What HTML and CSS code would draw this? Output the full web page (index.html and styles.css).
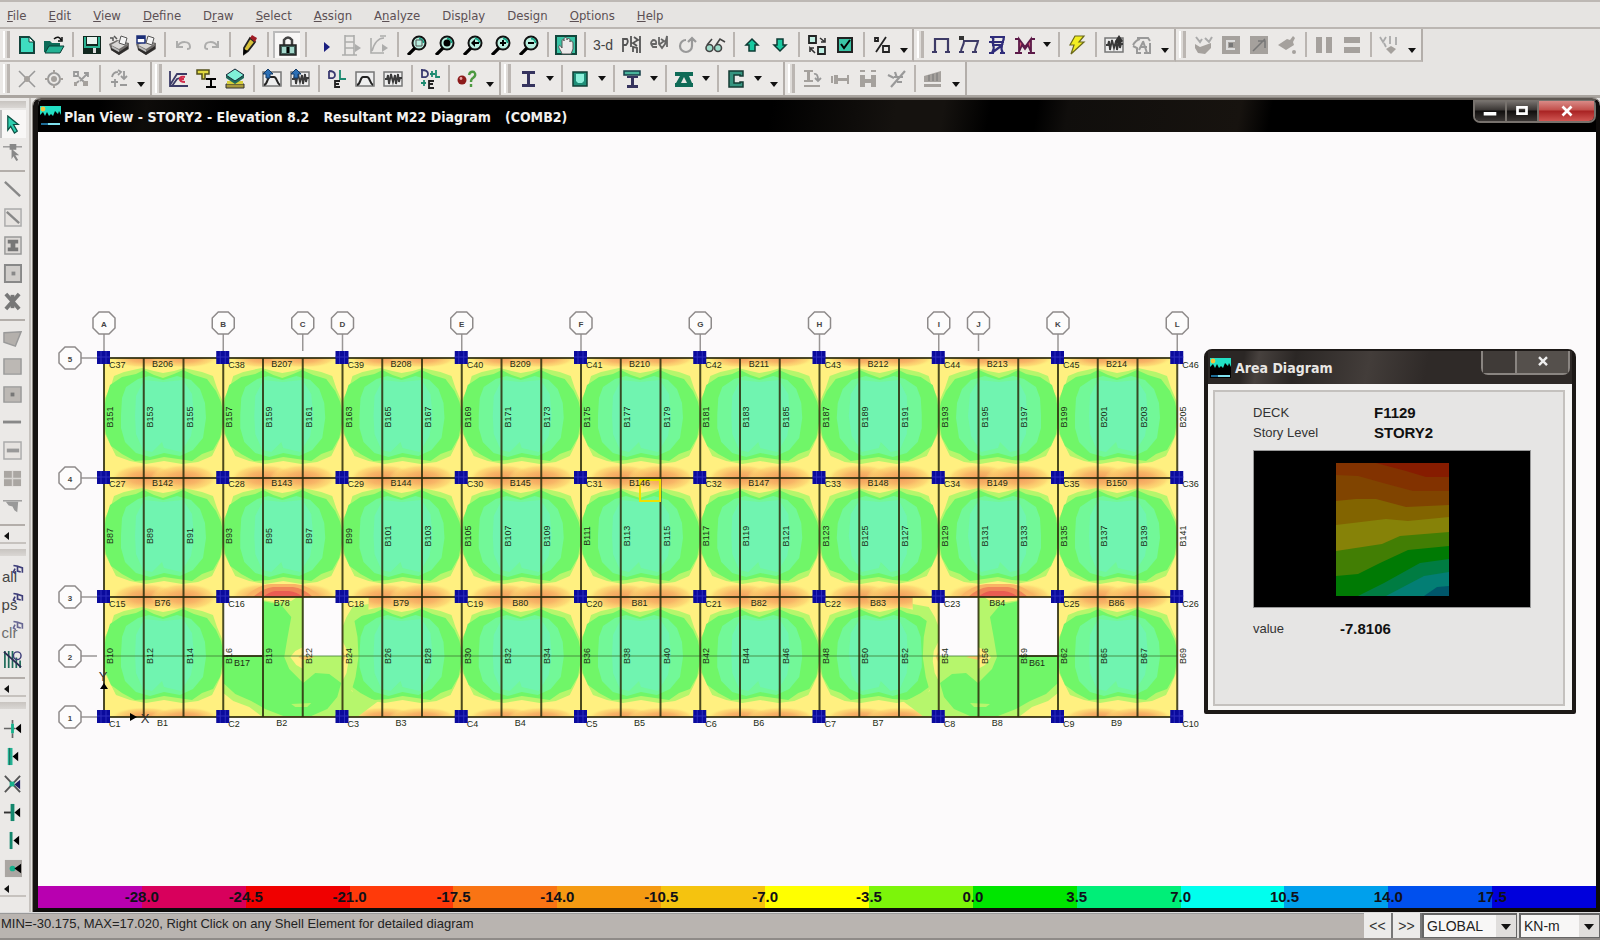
FILE: index.html
```html
<!DOCTYPE html>
<html lang="en">
<head>
<meta charset="utf-8">
<title>Plan View - STORY2</title>
<link rel="stylesheet" href="styles.css">
</head>
<body>
<svg width="0" height="0" class="defs" aria-hidden="true">
  <defs>
    <symbol id="app" viewBox="0 0 21 20"><path fill="#22e0c4" d="M0 0h21v14H0z"/><path fill="#000" d="M0 14V9l3-3 2 4 2-4 2 4 2-2 2 2 2-5 3 3 1-3 2 4v5z"/><circle cx="3" cy="3" r="2.4" fill="#f2c53c"/><path fill="#000" d="M0 14h21v6H0z"/><path fill="#1d6d97" d="M1 17h7v2H1z"/><path fill="#7fe0ee" d="M8 17h12v2H8z"/></symbol>
    <symbol id="lens" viewBox="0 0 20 20"><circle cx="12" cy="8" r="6.5" fill="#b9efe0" stroke="#111" stroke-width="2"/><path d="M8 13L1 20" stroke="#000" stroke-width="3.2"/><path d="M12 3.500a4.500 4.500 0 0 1 4.500 4.500" fill="none" stroke="#14a587" stroke-width="1.800"/></symbol>
    <symbol id="printer" viewBox="0 0 20 20"><path fill="#6f6c6a" d="M0 9l8-4 12 3v6l-10 6-8-5z"/><path fill="#d9d7d5" d="M2 10l7-4 9 3-8 5z"/><path fill="#f4f4f4" stroke="#555" d="M12 1l6 2-2 7-6-2z"/><path fill="#2e2c2b" d="M2 13l8 4 9-6v3l-9 6-8-5z"/><path fill="#bbb" d="M3 11l7 4v2l-7-4z"/></symbol>
    <symbol id="wave" viewBox="0 0 20 20"><path fill="#eee" stroke="#777" stroke-width="1.500" d="M1 3h18v14H1z"/><path fill="none" stroke="#3a3a3a" stroke-width="1.800" d="M2 10h2l1-4 1 9 2-10 2 8 2-7 1 9 2-10 1 8 1-4h2"/></symbol>
    <symbol id="hump" viewBox="0 0 20 20"><path fill="#eee" stroke="#777" stroke-width="1.500" d="M1 3h18v14H1z"/><path fill="none" stroke="#222" stroke-width="2" d="M2 16c4-1 3-8 6-8h4c3 0 3 7 6 8"/></symbol>
    <symbol id="hand" viewBox="0 0 16 14"><path fill="none" stroke="#3c3c78" stroke-width="2" d="M3 2l5 1v6l4 1M8 3l6 2v6M5 6l-2 4 3 2"/></symbol>
  </defs>
</svg>

<nav class="menu" aria-label="Main menu">
  <a href="#file"><u>F</u>ile</a><a href="#edit"><u>E</u>dit</a><a href="#view"><u>V</u>iew</a><a href="#define"><u>D</u>efine</a><a href="#draw">D<u>r</u>aw</a><a href="#select"><u>S</u>elect</a><a href="#assign"><u>A</u>ssign</a><a href="#analyze">A<u>n</u>alyze</a><a href="#display">Dis<u>p</u>lay</a><a href="#design">Desi<u>g</u>n</a><a href="#options"><u>O</u>ptions</a><a href="#help"><u>H</u>elp</a>
</nav>

<div class="tools">
  <div class="row">
    <div class="bar bar-main">
      <i class="grip"></i>
      <div class="set tight">
        <button aria-label="New"><svg viewBox="0 0 20 20"><path fill="#3fdcc0" stroke="#14443c" stroke-width="2" d="M3 2h9l5 5v11H3z"/><path fill="#fff" stroke="#14443c" d="M12 2v5h5z"/></svg></button>
        <button aria-label="Open"><svg viewBox="0 0 20 20"><path fill="#0c6b58" d="M0 6h6l2 2h8v9H0z"/><path fill="#24b294" stroke="#0b3d34" d="M1 18l4-7h15l-4 7z"/><path fill="none" stroke="#111" stroke-width="1.500" d="M10 4c3-3 6-2 7 1m1-3v4h-4"/></svg></button>
        <i class="sep"></i>
        <button aria-label="Save"><svg viewBox="0 0 20 20"><path fill="#12271f" d="M1 1h18v18H1z"/><path fill="#e9f4ef" d="M5 2h10v7H5z"/><path fill="#2bb393" d="M2 2h2v9h12V2h2v11H2z"/><path fill="#ddd" d="M11 13h3v5h-3z"/></svg></button>
        <button aria-label="Print"><svg viewBox="0 0 20 20"><use href="#printer"/><path fill="none" stroke="#555" stroke-width="1.500" d="M1 3h3v3M5 1l3 3"/></svg></button>
        <button aria-label="Print setup"><svg viewBox="0 0 20 20"><use href="#printer"/><path fill="#fff" stroke="#1c2f78" stroke-width="1.500" d="M1 1h8v7H1z"/><path fill="#1c2f78" d="M1 1h8v3H1z"/></svg></button>
        <i class="sep"></i>
        <button aria-label="Undo" class="off"><svg viewBox="0 0 20 20"><path fill="none" stroke="#999" stroke-width="2" d="M3 6v6h6M3 12c4-7 13-6 13 0 0 2-1 2-3 2"/></svg></button>
        <button aria-label="Redo" class="off"><svg viewBox="0 0 20 20"><path fill="none" stroke="#999" stroke-width="2" d="M17 6v6h-6M17 12C13 5 4 6 4 12c0 2 1 2 3 2"/></svg></button>
        <i class="sep"></i>
        <button aria-label="Draw"><svg viewBox="0 0 20 20"><path fill="#d8c23a" stroke="#222" stroke-width="1.800" d="M5 13L11 3l5 4-7 9-4 3z"/><path fill="#a01c24" d="M11 3l2-3 5 3-2 4z"/><path d="M4 20l1-6 4 2z"/></svg></button>
        <i class="sep"></i>
        <button aria-label="Lock model" class="pressed"><svg viewBox="0 0 20 20"><path fill="none" stroke="#444" stroke-width="2.500" d="M6 10V4q4-5 8 0v6"/><path fill="#41615a" stroke="#222" stroke-width="1.500" d="M2 9h16v10H2z"/><path fill="#a5d8cc" d="M4 11h4v6H4zm8 0h4v6h-4z"/><path d="M9 11h2v6H9z"/></svg></button>
        <i class="sep"></i>
        <button aria-label="Run"><svg viewBox="0 0 20 20"><path fill="#1b1f80" d="M9 7l6 5-6 5z"/></svg></button>
        <button aria-label="Run construction sequence" class="off"><svg viewBox="0 0 20 20"><path fill="none" stroke="#999" stroke-width="1.600" d="M3 0v20M12 0v20M0 20h15M3 1h9M3 7h9M3 13h9"/><path fill="#999" d="M13 9l6 4-6 4z"/></svg></button>
        <button aria-label="Run nonlinear" class="off"><svg viewBox="0 0 20 20"><path fill="none" stroke="#999" stroke-width="1.600" d="M2 3v15h13M3 16C5 9 8 3 15 3M11 1h6"/><path fill="#999" d="M13 9l6 4-6 4z"/></svg></button>
        <i class="sep"></i>
      </div>
      <div class="set">
        <button aria-label="Zoom window"><svg viewBox="0 0 20 20"><use href="#lens"/><path fill="none" stroke="#555" d="M9 5h6v6H9z"/></svg></button>
        <button aria-label="Restore view"><svg viewBox="0 0 20 20"><use href="#lens"/><circle cx="12" cy="8" r="3.500"/></svg></button>
        <button aria-label="Previous zoom"><svg viewBox="0 0 20 20"><use href="#lens"/><path d="M8 8l4-4v3h4v2h-4v3z"/></svg></button>
        <button aria-label="Zoom in"><svg viewBox="0 0 20 20"><use href="#lens"/><path d="M11 5h2v2h2v2h-2v2h-2V9H9V7h2z"/></svg></button>
        <button aria-label="Zoom out"><svg viewBox="0 0 20 20"><use href="#lens"/><path d="M9 7h6v2H9z"/></svg></button>
        <i class="sep"></i>
        <button aria-label="Pan"><svg viewBox="0 0 20 20"><path fill="#3ac4a5" stroke="#12473c" stroke-width="2" d="M0 1h20v18H0z"/><path fill="#eceaea" stroke="#555" d="M6 19c-1-4-4-6-3-8s2 1 3 2V6c0-2 2-2 2 0V4c0-2 3-2 3 0v1c0-2 3-2 3 0v2c0-2 3-1 3 1v6l-2 5z"/></svg></button>
        <i class="sep"></i>
        <button aria-label="3-d view" class="word">3-d</button>
        <button aria-label="Plan view" class="glyph"><svg viewBox="0 0 20 20"><path fill="none" stroke="#555" stroke-width="1.800" d="M2 17V4h4q2 3-1 6H2M10 1v11M19 1v17M13 2l4 3-5 3 4 3M12 17v-5l4 1v5"/></svg></button>
        <button aria-label="Elevation view"><svg viewBox="0 0 20 20"><path fill="none" stroke="#666" stroke-width="1.800" d="M8 12H4q-4-4 0-7 4 0 3 4H3M10 2v7l3 4 3-4 2-8v11M12 4l3 2-4 3"/></svg></button>
        <button aria-label="Rotate 3D view"><svg viewBox="0 0 20 20"><path fill="none" stroke="#999" stroke-width="2.200" d="M9 5a6 6 0 1 0 6 6V5M11 7l4-4 4 4"/></svg></button>
        <button aria-label="Perspective toggle"><svg viewBox="0 0 20 20"><g fill="#9edccb" stroke="#444" stroke-width="1.600"><circle cx="4.500" cy="13" r="3.500"/><circle cx="13" cy="13" r="3.500"/></g><path fill="none" stroke="#444" stroke-width="1.600" d="M2 10l5-6M11 10l4-6 5 3"/></svg></button>
        <i class="sep"></i>
        <button aria-label="Move up"><svg viewBox="0 0 20 20"><path fill="#18c9a0" stroke="#0d3b34" stroke-width="1.500" d="M10 4l6 6h-3v6H7v-6H4z"/></svg></button>
        <button aria-label="Move down"><svg viewBox="0 0 20 20"><path fill="#18c9a0" stroke="#0d3b34" stroke-width="1.500" d="M10 16l6-6h-3V4H7v6H4z"/></svg></button>
        <i class="sep"></i>
        <button aria-label="Shrink objects"><svg viewBox="0 0 20 20"><path fill="#bfeee2" stroke="#222" stroke-width="1.800" d="M2 1h7v7H2zM11 12h7v7h-7z"/><path fill="none" stroke="#333" stroke-width="1.600" d="M13 3l5 4M18 3v4h-4M8 18l-5-5v4M3 13h4"/></svg></button>
        <button aria-label="Set options"><svg viewBox="0 0 20 20"><path fill="#3ac4a5" stroke="#222" stroke-width="2" d="M3 3h14v14H3z"/><path fill="none" stroke="#000" stroke-width="2" d="M6 9l3 4 6-8"/></svg></button>
        <i class="sep"></i>
        <button aria-label="Assign to group"><svg viewBox="0 0 20 20"><path fill="none" stroke="#222" stroke-width="1.800" d="M3 3h3v3H3zM14 2L4 17M11 11h6v6h-6z"/></svg></button>
        <button aria-label="More view tools" class="more"></button>
      </div>
    </div>
    <div class="bar">
      <i class="grip"></i>
      <div class="set">
        <button aria-label="Frame display"><svg viewBox="0 0 20 20"><path fill="none" stroke="#3d3a66" stroke-width="2.200" d="M4 17V4h13v13M1 17h5M14 17h5"/></svg></button>
        <button aria-label="Deformed shape"><svg viewBox="0 0 20 20"><path fill="none" stroke="#3d3a66" stroke-width="2" d="M2 17c0-5 3-6 3-11h14c-1 5-3 6-3 11M0 17h5M13 17h5"/><path fill="#333" d="M0 1h5v4H0z"/></svg></button>
        <button aria-label="Mode shape"><svg viewBox="0 0 20 20"><path fill="none" stroke="#2f2c7a" stroke-width="2.200" d="M3 2h15M5 2c4 3-2 5 2 8M16 2c3 3-3 5 0 8M2 7h15M5 10h11M6 10c2 3 0 5-1 8M15 10c-1 3-1 5 1 8M6 17l8-6M2 18h5M13 18h5"/></svg></button>
        <button aria-label="Member forces"><svg viewBox="0 0 20 20"><path fill="#d65a75" stroke="#5c1a48" stroke-width="1.800" d="M4 17V4l6 8 6-8v13l-3-7-3 4-3-4zM0 18h7M13 18h7M0 4h4M16 4h4"/></svg></button>
        <button aria-label="Forces menu" class="drop"></button>
        <i class="sep"></i>
        <button aria-label="Energy diagram"><svg viewBox="0 0 20 20"><path fill="#f2ee22" stroke="#6b691a" stroke-width="1.200" d="M8 1h9l-5 6h5L4 19l3-9H3z"/></svg></button>
        <i class="sep"></i>
        <button aria-label="Response plot"><svg viewBox="0 0 20 20"><use href="#wave"/><path fill="#333" d="M15 0l4 6-4 4-4-4z"/></svg></button>
        <button aria-label="Output tables"><svg viewBox="0 0 20 20"><path fill="none" stroke="#999" stroke-width="2" d="M5 3h11l2 3M1 10q3-5 7-6M1 11l4 2v5h4M11 7L7 15M11 6l4 12M9 12h6M18 8v10h-6"/></svg></button>
        <button aria-label="More display tools" class="more"></button>
      </div>
    </div>
    <div class="bar">
      <i class="grip"></i>
      <div class="set gray">
        <button aria-label="Assign joint"><svg viewBox="0 0 20 20"><path d="M2 9l5 3 11-4v5l-6 6-7-1-3-5z"/><path fill="none" stroke="#aaa" stroke-width="2" d="M3 2l4 5 2-3M12 3l4 4 3-5"/></svg></button>
        <button aria-label="Assign area"><svg viewBox="0 0 20 20"><path d="M1 1h18v18H1z"/><path fill="#ddd" d="M5 5h9v2H7v6h7v2H5z"/><path fill="#777" d="M8 8h4v4H8z"/></svg></button>
        <button aria-label="Assign opening"><svg viewBox="0 0 20 20"><path d="M1 1h18v18H1z"/><path fill="none" stroke="#777" stroke-width="1.500" d="M4 16L16 4M9 6h7v7"/></svg></button>
        <button aria-label="Assign diaphragm"><svg viewBox="0 0 20 20"><path d="M1 10l9-6 3 1 3-4 2 2-2 4 1 3-8 5z"/><circle cx="17" cy="17" r="2"/></svg></button>
        <i class="sep"></i>
        <button aria-label="Split vertically"><svg viewBox="0 0 20 20"><path d="M2 2h6v16H2zM12 2h6v16h-6z"/></svg></button>
        <button aria-label="Split horizontally"><svg viewBox="0 0 20 20"><path d="M2 2h16v6H2zM2 12h16v6H2z"/></svg></button>
        <i class="sep"></i>
        <button aria-label="Area loads"><svg viewBox="0 0 20 20"><path d="M7 14l5-3 5 3-5 5z"/><path fill="none" stroke="#aaa" stroke-width="1.800" d="M1 2l3 5 3-5M5 8l2 4M11 1v8M17 2v8"/></svg></button>
        <button aria-label="More area tools" class="more"></button>
      </div>
    </div>
  </div>

  <div class="row">
    <div class="bar">
      <i class="grip"></i>
      <div class="set tight gray">
        <button aria-label="Point restraint"><svg viewBox="0 0 20 20"><path fill="none" stroke="#999" stroke-width="1.600" d="M2 2l16 16M18 2L2 18"/><circle cx="10" cy="10" r="3"/></svg></button>
        <button aria-label="Point mass"><svg viewBox="0 0 20 20"><circle cx="10" cy="10" r="6" fill="none" stroke="#999" stroke-width="2"/><circle cx="10" cy="10" r="3"/><path d="M9 1h2v4H9zM9 15h2v4H9zM1 9h4v2H1zM15 9h4v2h-4z"/></svg></button>
        <button aria-label="Point springs"><svg viewBox="0 0 20 20"><path fill="none" stroke="#999" stroke-width="1.800" d="M3 3h4v4H3zM8 8l6 6M16 5L9 12M13 4h4v4M4 15l4-3"/><path d="M12 12h5v5h-5zM3 13h3v4H3z"/></svg></button>
        <i class="sep"></i>
        <button aria-label="Point forces"><svg viewBox="0 0 20 20"><path fill="none" stroke="#999" stroke-width="1.800" d="M3 8q1-5 6-5M9 1l3 2-3 3M15 2v7M12 7l3 3 3-3M2 13h7M6 10v8M11 16h7"/></svg></button>
        <button aria-label="More point tools" class="more"></button>
      </div>
    </div>
    <div class="bar">
      <i class="grip"></i>
      <div class="set">
        <button aria-label="Materials"><svg viewBox="0 0 20 20"><path fill="none" stroke="#3b3a66" stroke-width="1.800" d="M1 2v15h18M1 16L8 5h10M3 17l5-7 3-1"/><path fill="none" stroke="#d12c4c" stroke-width="2.200" d="M16 8q-5-1-5 2t5 3M11 10h4"/></svg></button>
        <button aria-label="Frame sections"><svg viewBox="0 0 20 20"><path fill="#e2da42" stroke="#54501d" stroke-width="1.500" d="M0 1h12v4H8v5H5V5H0z"/><path d="M9 9h10v2h-4v6h4v2H9v-2h4v-6H9z"/></svg></button>
        <button aria-label="Wall slab sections"><svg viewBox="0 0 20 20"><path fill="#a89a3c" stroke="#333" d="M1 15h18v4H1z"/><path fill="#d6cf3c" d="M2 12h16v3H2z"/><path fill="#1f6b5a" d="M1 6l9 6 9-6v3l-9 6-9-6z"/><path fill="#7ff0d8" stroke="#123" d="M10 0l9 6-9 6-9-6z"/></svg></button>
        <i class="sep"></i>
        <button aria-label="Response spectrum functions"><svg viewBox="0 0 20 20"><use href="#hump"/><path fill="#2b6fb5" stroke="#123a66" d="M6 0l5 5H8v4H4V5H1z"/></svg></button>
        <button aria-label="Time history functions"><svg viewBox="0 0 20 20"><use href="#wave"/><path fill="#2b6fb5" stroke="#123a66" d="M6 0l5 5H8v4H4V5H1z"/></svg></button>
        <i class="sep"></i>
        <button aria-label="Static load cases"><svg viewBox="0 0 20 20"><path fill="none" stroke="#3a3a70" stroke-width="1.800" d="M2 2v7q6 1 6-3t-6-4"/><path fill="none" stroke="#1c8a70" stroke-width="1.800" d="M13 1v9h6"/><path fill="none" stroke="#222" stroke-width="1.800" d="M13 12H8v6h5M8 15h4"/></svg></button>
        <button aria-label="Response spectrum cases"><svg><use href="#hump"/></svg></button>
        <button aria-label="Time history cases"><svg><use href="#wave"/></svg></button>
        <i class="sep"></i>
        <button aria-label="Load combinations"><svg viewBox="0 0 20 20"><path fill="none" stroke="#3a3a70" stroke-width="1.800" d="M1 1h1v7q6 1 6-3t-6-4"/><path fill="none" stroke="#1c8a70" stroke-width="1.800" d="M10 5h5M12 2v6M16 1v7h4M1 14h5M4 11v6"/><path fill="none" stroke="#222" stroke-width="1.800" d="M14 12H9v7h5M9 15h4"/></svg></button>
        <i class="sep"></i>
        <button aria-label="Mass source"><svg viewBox="0 0 20 20"><circle cx="5" cy="11" r="4.500" fill="#8c1a1a"/><circle cx="4" cy="9.500" r="1.400" fill="#e7a4a4"/><path fill="none" stroke="#4d9a42" stroke-width="2.400" d="M12 6q1-4 5-3 3 3-1 6-2 1-2 4M14 15v3"/></svg></button>
        <button aria-label="More define tools" class="more"></button>
      </div>
    </div>
    <div class="bar">
      <i class="grip"></i>
      <div class="set">
        <button aria-label="Steel frame design"><svg viewBox="0 0 20 20"><path fill="#36345e" d="M4 2h13v3h-5v10h5v3H4v-3h5V5H4z"/></svg></button><button aria-label="Steel menu" class="drop"></button><i class="sep"></i>
        <button aria-label="Concrete frame design"><svg viewBox="0 0 20 20"><path fill="#1f8f78" stroke="#123f36" stroke-width="1.500" d="M3 3h14v14H3z"/><path fill="#8df0db" d="M6 5h8v7l-2 2H8l-2-2z"/></svg></button><button aria-label="Concrete menu" class="drop"></button><i class="sep"></i>
        <button aria-label="Composite beam design"><svg viewBox="0 0 20 20"><path fill="#49b39b" stroke="#173f4a" stroke-width="1.500" d="M2 2h16v4H2z"/><path fill="#36345e" d="M5 7h11v2h-4v7h4v3H5v-3h4V9H5z"/></svg></button><button aria-label="Composite menu" class="drop"></button><i class="sep"></i>
        <button aria-label="Steel joist design"><svg viewBox="0 0 20 20"><path fill="#0f6b57" d="M1 3h18v4h-4l3 7h1v4H1v-4h1l4-7H1z"/><path fill="#e9e7e4" d="M10 8l3 6H7z"/></svg></button><button aria-label="Joist menu" class="drop"></button><i class="sep"></i>
        <button aria-label="Shear wall design"><svg viewBox="0 0 20 20"><path fill="#36947f" stroke="#143a33" stroke-width="1.500" d="M3 2h14v5h-3V6H8v8h6v-1h3v5H3z"/></svg></button><button aria-label="Wall menu" class="drop"></button>
        <button aria-label="More design tools" class="more"></button>
      </div>
    </div>
    <div class="bar">
      <i class="grip"></i>
      <div class="set gray">
        <button aria-label="Frame section"><svg viewBox="0 0 20 20"><path d="M2 1h9v2H8v8h3v2H2v-2h3V3H2zM2 16h16v2H2z"/><path fill="none" stroke="#999" stroke-width="1.800" d="M12 5q4-1 4 6M13 9l3 3 3-3"/></svg></button>
        <button aria-label="Frame releases"><svg viewBox="0 0 20 20"><path d="M1 7h2v7H1zM4 6h4v9H4zM8 9h9v3H8zM17 6h2v9h-2z"/></svg></button>
        <button aria-label="End offsets"><svg viewBox="0 0 20 20"><path d="M2 1h5v2H2zM13 1h5v2h-5zM2 6h5v4h6V6h5v12h-5v-4H7v4H2z"/></svg></button>
        <button aria-label="Local axes"><svg viewBox="0 0 20 20"><path fill="none" stroke="#999" stroke-width="2.200" d="M2 6l6 3M19 2L5 18M9 3l2 6M8 8h9M11 13h5"/></svg></button>
        <i class="sep"></i>
        <button aria-label="Line loads"><svg viewBox="0 0 20 20"><path d="M1 7l17-5v11H1zM1 15h17v3H1z"/><path stroke="#777" d="M6 6v6M10 5v7M14 4v8"/></svg></button>
        <button aria-label="More line tools" class="more"></button>
      </div>
    </div>
  </div>
</div>

<div class="work">
  <aside class="side" aria-label="Drawing tools">
    <i class="grip-h first"></i>
    <button aria-label="Pointer" class="pressed"><svg viewBox="0 0 20 20"><path fill="#2fd0b0" stroke="#0c5144" stroke-width="1.300" d="M4 1l11 9h-5l4 7-3 2-4-7-3 4z"/></svg></button>
    <button aria-label="Reshaper"><svg viewBox="0 0 20 20"><path fill="none" stroke="#999" stroke-width="1.500" d="M0 4h20"/><path fill="#888" d="M7 1h7v6H7zM9 6l8 7h-4l3 5-2 1-3-5-2 3z"/></svg></button>
    <i class="sep"></i>
    <button aria-label="Draw lines"><svg viewBox="0 0 20 20"><path stroke="#888" stroke-width="2.500" d="M2 2l16 15"/></svg></button>
    <button aria-label="Create lines"><svg viewBox="0 0 20 20"><path fill="#e6e3e0" stroke="#aaa" stroke-width="1.500" d="M2 1h17v18H2z"/><path stroke="#888" stroke-width="2.500" d="M4 4l13 12"/></svg></button>
    <button aria-label="Create columns"><svg viewBox="0 0 20 20"><path fill="#dcd9d6" stroke="#999" stroke-width="1.500" d="M2 1h17v18H2z"/><path fill="#777" d="M5 4h11v4h-3v4h3v4H5v-4h3V8H5z"/></svg></button>
    <button aria-label="Create secondary beams"><svg viewBox="0 0 20 20"><path fill="#d0cdca" stroke="#888" stroke-width="2" d="M2 1h17v18H2z"/><path fill="#888" d="M9 8h4v4H9z"/></svg></button>
    <button aria-label="Create braces"><svg viewBox="0 0 20 20"><path stroke="#777" stroke-width="4" d="M3 2l14 16M17 2L3 18"/><path stroke="#777" stroke-width="4" d="M10 3v14"/></svg></button>
    <i class="sep"></i>
    <button aria-label="Draw areas"><svg viewBox="0 0 20 20"><path fill="#b4b0ac" stroke="#999" stroke-width="1.500" d="M1 4l18-1-6 15-12-4z"/></svg></button>
    <button aria-label="Draw rectangles"><svg viewBox="0 0 20 20"><path fill="#bcb8b4" stroke="#999" stroke-width="1.500" d="M1 2h18v16H1z"/></svg></button>
    <button aria-label="Create areas"><svg viewBox="0 0 20 20"><path fill="#bcb8b4" stroke="#999" stroke-width="1.500" d="M1 2h18v16H1z"/><path fill="#777" d="M8 8h4v4H8z"/></svg></button>
    <button aria-label="Draw walls"><svg viewBox="0 0 20 20"><path fill="#888" d="M0 8h19v3H0z"/></svg></button>
    <button aria-label="Create walls"><svg viewBox="0 0 20 20"><path fill="#e6e3e0" stroke="#aaa" stroke-width="1.500" d="M1 1h18v18H1z"/><path fill="#999" d="M4 8h13v4H4z"/></svg></button>
    <button aria-label="Draw windows"><svg viewBox="0 0 20 20"><path fill="#aaa6a2" d="M1 2h18v16H1z"/><path stroke="#d8d5d2" stroke-width="1.500" d="M10 2v16M1 10h18"/></svg></button>
    <button aria-label="Draw doors"><svg viewBox="0 0 20 20"><path stroke="#999" stroke-width="1.500" d="M0 4h20"/><path fill="#999" d="M3 5h13l-1 11-3-2-2-4-4-1z"/></svg></button>
    <i class="sep"></i>
    <button aria-label="More drawing tools" class="more-h"></button>
    <i class="grip-h"></i>
    <button aria-label="Select all" class="word sel">all<svg><use href="#hand"/></svg></button>
    <button aria-label="Previous selection" class="word sel">ps<svg><use href="#hand"/></svg></button>
    <button aria-label="Clear selection" class="word sel off">clr<svg><use href="#hand"/></svg></button>
    <button aria-label="Intersecting line select"><svg viewBox="0 0 20 20"><path stroke="#1f6b5a" stroke-width="1.800" d="M2 1v18M6 1v18M10 1v18M14 8v11M18 11v8"/><path stroke="#2b2b50" stroke-width="2" d="M1 2l18 16"/><circle cx="15" cy="6" r="4" fill="none" stroke="#3c3c78" stroke-width="1.500"/></svg></button>
    <i class="sep"></i>
    <button aria-label="More selection tools" class="more-h"></button>
    <i class="grip-h"></i>
    <button aria-label="Snap to grid points"><svg viewBox="0 0 20 20"><path fill="none" stroke="#666" stroke-width="1.800" d="M1 10h12M10 1v4M10 15v5"/><path stroke="#18b08c" stroke-width="3" d="M10 5v10"/><path d="M19 5v10l-6-5z"/></svg></button>
    <button aria-label="Snap to midpoints"><svg viewBox="0 0 20 20"><path fill="#24b294" d="M5 1h5v18H5z"/><path stroke="#1c6655" d="M7 1v18"/><path d="M16 5v10l-6-5z"/></svg></button>
    <button aria-label="Snap to intersections"><svg viewBox="0 0 20 20"><path fill="none" stroke="#555" stroke-width="2" d="M2 1l16 17M18 1L2 18"/><path fill="#18b08c" d="M7 7h5v5H7z"/><path fill="#1f1f60" d="M18 5v10l-6-5z"/></svg></button>
    <button aria-label="Snap to perpendicular"><svg viewBox="0 0 20 20"><path stroke="#333" stroke-width="2" d="M1 10h10"/><path fill="#14876d" d="M8 1h4v18H8z"/><path d="M18 5v10l-6-5z"/></svg></button>
    <button aria-label="Snap to lines"><svg viewBox="0 0 20 20"><path fill="#14876d" d="M7 1h3v18H7z"/><path d="M17 5v10l-6-5z"/></svg></button>
    <button aria-label="Snap to fine grid"><svg viewBox="0 0 20 20"><path fill="#aaa6a2" d="M2 1h18v18H2z"/><circle cx="10" cy="10" r="3" fill="#18b08c"/><path d="M19 5v10l-7-5z"/></svg></button>
    <button aria-label="More snap tools" class="more-h"></button>
  </aside>

  <main class="window">
    <header class="title">
      <svg class="logo"><use href="#app"/></svg>
      <h1><span>Plan View - STORY2 - Elevation 8.2</span><span>Resultant M22 Diagram</span><span>(COMB2)</span></h1>
      <div class="caption">
        <button aria-label="Minimize"><svg viewBox="0 0 20 20"><path fill="#fff" d="M3 11h14v4H3z"/></svg></button>
        <button aria-label="Maximize"><svg viewBox="0 0 20 20"><path fill="none" stroke="#fff" stroke-width="3" d="M5 6h10v7H5z"/></svg></button>
        <button aria-label="Close" class="close"><svg viewBox="0 0 20 20"><path stroke="#fff" stroke-width="3" d="M5 5l10 10M15 5L5 15"/></svg></button>
      </div>
    </header>
    <div class="canvas">
      <svg id="plan" viewBox="38 132 1558 753" preserveAspectRatio="xMinYMin meet" role="img" aria-label="Resultant M22 contour plan"></svg>
      <section class="dialog" aria-label="Area Diagram">
        <header class="dialog-title">
          <svg class="logo"><use href="#app"/></svg>
          <h2>Area Diagram</h2>
          <div class="dialog-caption"><button aria-label="Help"></button><button aria-label="Close dialog"><svg viewBox="0 0 20 20"><path stroke="#eee" stroke-width="3" d="M5 4l10 10M15 4L5 14"/></svg></button></div>
        </header>
        <div class="dialog-body">
          <div class="group">
            <dl class="facts"><dt>DECK</dt><dd>F1129</dd><dt>Story Level</dt><dd>STORY2</dd></dl>
            <div class="preview">
              <svg viewBox="0 0 113 133" role="img" aria-label="Area contour">
                <path fill="#861c00" d="M0 0h113v133H0z"/>
                <path fill="#823200" d="M0 0h40l30 8 20 6h23v119H0z"/>
                <path fill="#804400" d="M0 12l22 1 25 7 30 8h36v105H0z"/>
                <path fill="#826400" d="M0 38l20-2 20 0 30 8 43-2v91H0z"/>
                <path fill="#868208" d="M0 62l25-3 25-3 22 2 41-4v79H0z"/>
                <path fill="#427e04" d="M0 88l46-7 18-8 49-4v64H0z"/>
                <path fill="#007a04" d="M0 113l22-2 22-11 28-13 41-4v50H0z"/>
                <path fill="#007c42" d="M22 133l26-13 36-20 29-4v37z"/>
                <path fill="#037e74" d="M50 133l38-20 25-4v24z"/>
                <path fill="#00566a" d="M88 133l13-9 12-1v10z"/>
              </svg>
            </div>
            <dl class="reading"><dt>value</dt><dd>-7.8106</dd></dl>
          </div>
        </div>
      </section>
    </div>
    <ol class="legend"><li>-28.0</li><li>-24.5</li><li>-21.0</li><li>-17.5</li><li>-14.0</li><li>-10.5</li><li>-7.0</li><li>-3.5</li><li>0.0</li><li>3.5</li><li>7.0</li><li>10.5</li><li>14.0</li><li>17.5</li></ol>
  </main>
</div>

<footer class="status">
  <p>MIN=-30.175, MAX=17.020, Right Click on any Shell Element for detailed diagram</p>
  <button>&lt;&lt;</button><button>&gt;&gt;</button>
  <label class="pick pick-axes"><select aria-label="Coordinate system"><option>GLOBAL</option></select></label>
  <label class="pick pick-units"><select aria-label="Units"><option>KN-m</option></select></label>
</footer>
<script src="plan.js"></script>
</body>
</html>
```
FILE: styles.css
```css
* { box-sizing: border-box; }
html, body { height: 100%; margin: 0; }
body {
  display: flex;
  flex-direction: column;
  overflow: hidden;
  background: #e6e4e2;
  font-family: "Liberation Sans", Arial, sans-serif;
  font-size: 13px;
  color: #222;
}
button {
  font: inherit;
  color: inherit;
  border: 0;
  padding: 0;
  background: none;
  display: flex;
  align-items: center;
  justify-content: center;
}
h1, h2, p, dl, dd, ol { margin: 0; padding: 0; }
.defs { position: absolute; }

/* Menu */
.menu {
  display: flex;
  gap: 22px;
  align-items: center;
  height: 29px;
  padding: 2px 7px 0;
  border-top: 2px solid #bdb8b4;
  border-bottom: 2px solid #bbb6b2;
  font-family: "DejaVu Sans Condensed", "DejaVu Sans", sans-serif;
  font-size: 13px;
}
.menu a { color: #5c5054; text-decoration: none; }

/* Toolbars */
.tools { border-bottom: 3px solid #aaa5a0; }
.row { display: flex; height: 33px; }
.bar {
  display: flex;
  border-right: 2px solid #b3aeaa;
  border-bottom: 2px solid #c0bbb7;
  background: #ebe9e7;
}
.row:last-child .bar { border-bottom: 0; }
.grip {
  width: 7px;
  margin: 2px 3px 2px 3px;
  border-left: 2px solid #fff;
  border-right: 3px solid #bbb6b2;
  background: #dedbd8;
}
.set { display: flex; }
.set button { width: 28px; }
.tight button { width: 27px; }
.set svg { width: 20px; height: 20px; overflow: visible; }
.sep {
  width: 9px;
  margin: 3px 0;
  background: linear-gradient(#bab5b1, #bab5b1) center / 2px 100% no-repeat;
}
.tight .sep { width: 11px; }
.gray svg { fill: #a5a19d; }
.off { opacity: .75; }
.set .pressed { background: #f8f7f6; border-top: 2px solid #bbb; border-left: 2px solid #bbb; margin: 2px 0; }
.word { font-size: 14px; color: #444; }
.set .drop { width: 15px; }
.set .more { width: 18px; }
.bar-main .more { width: 16px; }
.drop::after, .more::after {
  content: "";
  border: 4px solid transparent;
  border-top: 5px solid #111;
  border-bottom: 0;
}
.more::after { margin-top: 12px; }

/* Work area */
.work { display: flex; flex: 1; min-height: 0; }
.side {
  display: flex;
  flex-direction: column;
  width: 31px;
  padding-right: 3px;
  border-right: 2px solid #c6c2be;
  background: #ebe9e7;
  overflow: hidden;
}
.side button { height: 28px; flex: none; padding-right: 1px; }
.side svg { width: 19px; height: 19px; }
.side .sep { width: 25px; height: 9px; margin: 0; flex: none; background: linear-gradient(#b3aeaa, #b3aeaa) center / 100% 2px no-repeat; }
.side .more-h { height: 15px; justify-content: flex-start; padding-left: 4px; border-bottom: 2px solid #c6c2be; }
.more-h::after { content: ""; border: 4px solid transparent; border-right: 5px solid #111; border-left: 0; }
.grip-h { height: 17px; flex: none; background: linear-gradient(#c8c4c0, #dad7d4) center / 100% 7px no-repeat; }
.side .first { height: 12px; }
.side .pressed { background: #f8f7f6; border-left: 2px solid #bbb; }
.side .sel { font-size: 15px; align-items: flex-end; padding: 0 0 4px; }
.side .sel svg { width: 13px; height: 13px; align-self: flex-start; margin: 2px 0 0 -6px; }

.window {
  display: flex;
  flex-direction: column;
  flex: 1;
  min-width: 0;
  border: solid #0d0b0a;
  border-width: 2px 4px 4px 5px;
  border-left-color: #161312;
  border-top-color: #5d5752;
  outline: 1px solid #8d8883;
  border-radius: 8px 8px 0 0;
  margin-left: 2px;
  background: #fcfafb;
  overflow: hidden;
}
.title {
  display: flex;
  align-items: center;
  height: 32px;
  flex: none;
  padding-left: 2px;
  background: linear-gradient(100deg, #000 0 4%, #0e0c0a 7%, #000 12% 47%, #15120f 55% 58%, #000 61% 64%, #100e0c 66%, #17130f 77%, #000 79%);
  color: #fff;
}
.logo { width: 21px; height: 20px; flex: none; }
.title h1 {
  display: flex;
  gap: 14px;
  flex: 1;
  padding: 2px 0 0 3px;
  font: bold 14px "DejaVu Sans Condensed", "DejaVu Sans", sans-serif;
  color: #f2f0ee;
  white-space: nowrap;
}
.caption {
  display: flex;
  align-self: flex-start;
  height: 23px;
  border: 2px solid #77726d;
  border-top-width: 1px;
  border-radius: 0 0 7px 7px;
  overflow: hidden;
}
.caption button { width: 32px; background: linear-gradient(#77726e, #3a3634 45%, #100e0d 50%, #3a3634); border-right: 2px solid #77726d; }
.caption svg { width: 18px; height: 18px; }
.caption .close { width: 55px; border: 0; background: linear-gradient(#d98a86, #c2504c 45%, #a82222 50%, #d05652); }

.canvas { position: relative; flex: 1; min-height: 0; }
#plan { display: block; width: 100%; height: 100%; }
#plan text { font: 9px "Liberation Sans", Arial, sans-serif; fill: #1c2c14; }
#plan .bubble { fill: #fdfcfc; stroke: #8e8a8a; stroke-width: 1.5; }
#plan .name { font-size: 8px; font-weight: bold; fill: #444; }
#plan .stem { stroke: #9a9696; stroke-width: 1.5; }
#plan .beam { stroke: #2c2c0c; stroke-width: 2; opacity: .85; }
#plan .thin { stroke: #3c7a32; stroke-width: 1; opacity: .8; }
#plan .mid { text-anchor: middle; }
#plan .axis { font-size: 13px; fill: #333; }

/* Area diagram */
.dialog {
  position: absolute;
  top: 217px;
  right: 20px;
  width: 372px;
  border: 4px solid #1d1917;
  border-top-width: 2px;
  border-radius: 8px 8px 2px 2px;
  background: #2b2725;
  color: #333;
}
.dialog-title { display: flex; align-items: center; height: 33px; padding-left: 2px; background: linear-gradient(100deg, #2b2725 10%, #47413e 14%, #2b2725 24%, #433d3a 44%, #2f2a28 60%); }
.dialog-title h2 { flex: 1; padding-left: 4px; font: bold 14px "DejaVu Sans Condensed", "DejaVu Sans", sans-serif; color: #e8e6e4; }
.dialog-caption { display: flex; align-self: flex-start; height: 24px; margin-right: 2px; border: 2px solid #8a8581; border-top: 0; border-radius: 0 0 7px 7px; }
.dialog-caption button { width: 32px; background: #403b38; }
.dialog-caption button + button { width: 53px; border-left: 2px solid #8a8581; background: #55504c; }
.dialog-caption svg { width: 16px; height: 16px; }
.dialog-body { padding: 6px 7px 4px 5px; background: #f6f5f4; }
.group { height: 316px; padding: 12px 32px 0 38px; border: 2px solid #c4c1be; background: #e6e5e4; }
.facts { display: grid; grid-template-columns: 121px 1fr; row-gap: 2px; line-height: 18px; }
.group dd { font-weight: bold; font-size: 15px; color: #111; }
.preview { display: flex; justify-content: center; align-items: center; height: 158px; margin-top: 8px; border: 1px solid #999; background: #000; }
.preview svg { width: 113px; height: 133px; }
.reading { display: grid; grid-template-columns: 87px 1fr; line-height: 18px; margin-top: 12px; }

.legend {
  display: flex;
  flex: none;
  height: 22px;
  padding: 0 calc(100% / 30);
  list-style: none;
  font-weight: bold;
  font-size: 15px;
  line-height: 22px;
  color: #101018;
  background: linear-gradient(90deg,
    #b800b0 0 6.667%, #d8005c 0 13.333%, #f00000 0 20%, #ff3a0a 0 26.667%,
    #f97414 0 33.333%, #f59a12 0 40%, #f5c30f 0 46.667%, #ffff00 0 53.333%,
    #7cf50a 0 60%, #00e600 0 66.667%, #00ee78 0 73.333%, #00ffee 0 80%,
    #00a0ec 0 86.667%, #0050ee 0 93.333%, #0000dc 0);
}
.legend li { flex: 1; text-align: center; }

/* Status bar */
.status {
  display: flex;
  flex: none;
  height: 28px;
  border-top: 1px solid #ddd;
  border-bottom: 2px solid #8f8b88;
  background: #e0dedc;
}
.status p { flex: 1; padding-left: 1px; line-height: 20px; background: #b9b4b0; border-top: 1px solid #999; }
.status button { width: 29px; color: #333; background: #ecebea; border-right: 2px solid #777; font-size: 14px; }
.pick { position: relative; border: 2px solid #666; border-width: 2px 1px 1px 2px; background: #fff; }
.pick + .pick { margin-left: 2px; }
.pick::after {
  content: "";
  position: absolute;
  right: 5px;
  top: 9px;
  border: 5px solid transparent;
  border-top: 6px solid #111;
  border-bottom: 0;
  pointer-events: none;
}
.pick select { width: 100%; height: 100%; padding: 0 3px; border: 0; appearance: none; font: inherit; font-size: 14px; color: #222; background: linear-gradient(#e0dedc, #e0dedc) right / 20px 100% no-repeat #f8f7f6; }
.pick-axes { width: 95px; }
.pick-units { width: 81px; }
```
FILE: plan.js
```js
const plan = document.getElementById('plan');
const out = [];
const LEFT = 104, BAY = 119.25, THIRD = BAY / 3;
const ROW = { 5: 358, 4: 478, 3: 597, 2: 656, 1: 717 };
const bayX = i => LEFT + i * BAY;

const COLORS = { yellow: '#fff080', pale: '#b6f66c', green: '#70f668', spring: '#72f898', aqua: '#70f4b0' };

/* Contour bands of a regular slab panel, on a 119 by 119 grid. */
const BANDS = [
  ['pale', '0,42 7,28 10,18 20,14 38,10 50,13 59,15 70,13 80,10 98,14 109,18 113,30 119,44 119,74 113,88 108,98 94,104 78,106 60,103 42,106 26,103 12,98 7,88 0,74'],
  ['green', '0,52 2,40 6,27 18,19 32,16 40,12 50,17 59,20 70,16 79,12 90,17 103,21 112,33 117,44 119,54 119,64 116,80 109,92 98,96 88,103 74,101 60,99 46,102 31,103 18,96 7,88 2,76 0,64'],
  ['spring', '17,57 18,40 22,29 34,21 45,18 59,22 73,18 87,22 96,31 101,45 102,60 99,80 89,92 76,98 60,95 46,99 32,95 21,84 17,70'],
  ['aqua', '31,58 32,38 40,22 59,24 79,22 88,36 90,58 87,78 77,94 60,90 58,84 48,94 39,92 32,76']
];
const poly = (points, fill) => `<polygon points="${points}" fill="${fill}"/>`;
const line = (x1, y1, x2, y2, cls) => `<line x1="${x1}" y1="${y1}" x2="${x2}" y2="${y2}" class="${cls}"/>`;
const text = (x, y, value, cls = '') => `<text x="${x}" y="${y}" class="${cls}">${value}</text>`;
const upright = (x, y, value) => `<text class="mid" transform="translate(${x} ${y}) rotate(-90)">${value}</text>`;

/* The panel around the stair openings; mirrored for the right-hand core. */
function corePanel() {
  return poly('0,0 119,0 119,119 0,119', COLORS.green)
    + poly('39,0 80,0 80,59 119,59 119,119 88,119 104,112 114,100 118,86 106,77 92,76 80,86 74,80 66,72 61,60 64,42 68,20 58,8 39,4', COLORS.pale)
    + poly('39,0 74,0 68,4 52,5 39,3', COLORS.yellow)
    + poly('67,60 72,54 80,50 80,72 73,68', COLORS.yellow)
    + poly('75,60 80,56 92,60 80,63', '#fdc56c')
    + poly('0,86 12,97 28,104 42,112 60,119 0,119', COLORS.pale)
    + poly('0,96 10,104 26,110 38,119 0,119', COLORS.yellow)
    + poly('68,107 88,106 84,110 72,110', COLORS.pale)
    + '<rect width="39" height="59" fill="#fdfbfc"/><rect x="80" width="39" height="59" fill="#fdfbfc"/>';
}
function edgePanel() {
  return poly('0,0 26,0 26,14 12,24 15,40 16,60 13,80 9,94 22,100 36,104 28,110 16,119 0,119', COLORS.pale)
    + poly('0,0 26,0 26,7 10,10 4,20 0,30', COLORS.yellow)
    + poly('0,44 5,54 6,64 4,76 0,84', COLORS.yellow)
    + poly('0,54 3,60 0,66', '#fdc56c');
}

out.push(`<defs>
  <radialGradient id="warm"><stop offset="0" stop-color="#f29a5c"/><stop offset=".45" stop-color="#f6ac62" stop-opacity=".85"/><stop offset=".8" stop-color="#fccb6c" stop-opacity=".6"/><stop offset="1" stop-color="#fff080" stop-opacity="0"/></radialGradient>
  <clipPath id="slab"><rect x="${LEFT}" y="${ROW[5]}" width="${BAY * 9}" height="359"/></clipPath>
</defs>`);
out.push(`<rect x="${LEFT}" y="${ROW[5]}" width="${BAY * 9}" height="359" fill="${COLORS.yellow}"/>`);
const haze = (x, y, w, h) => `<ellipse cx="${x}" cy="${y}" rx="${w}" ry="${h}" fill="url(#warm)"/>`;
const bands = [];
for (let i = 0; i < 9; i++) {
  const c = bayX(i) + BAY / 2;
  [5, 4, 3, 1].forEach(r => {
    const big = r === 4 || r === 3;
    bands.push(haze(c - 19, ROW[r], 34, big ? 14 : 10));
    bands.push(haze(c + 21, ROW[r], 34, big ? 14 : 10));
  });
}
out.push(`<g clip-path="url(#slab)">${bands.join('')}</g>`);

[5, 4, 3].forEach(r => {
  for (let i = 0; i < 9; i++) {
    const core = r === 3 && (i === 1 || i === 7);
    const flip = i === 7 || i === 6;
    const place = flip ? `translate(${bayX(i + 1)} ${ROW[r]}) scale(-1 1)` : `translate(${bayX(i)} ${ROW[r]})`;
    let body = core ? corePanel() : BANDS.map(b => poly(b[1], COLORS[b[0]])).join('');
    if (r === 3 && (i === 2 || i === 6)) body += edgePanel();
    out.push(`<g transform="${place}">${body}</g>`);
  }
});
[283, 998].forEach(x => {
  out.push(`<path d="M${x - 38} 597q12-12 26-13h24q14 1 26 13z" fill="#f9b465"/><path d="M${x - 30} 597q10-9 20-10h20q10 1 20 10z" fill="#f08458"/><path d="M${x - 20} 597q6-5 12-6h14q8 1 14 6z" fill="#ea5c52"/>`);
});

/* Beams */
[5, 4, 3, 1].forEach(r => out.push(line(LEFT, ROW[r], bayX(9), ROW[r], 'beam')));
out.push(line(LEFT, ROW[2], bayX(9), ROW[2], 'thin'));
out.push(line(bayX(1), ROW[2], bayX(1) + THIRD, ROW[2], 'beam'), line(bayX(8) - THIRD, ROW[2], bayX(8), ROW[2], 'beam'));
for (let k = 0; k < 28; k++) out.push(line(LEFT + k * THIRD, ROW[5], LEFT + k * THIRD, ROW[1], 'beam'));
out.push('<rect x="640" y="480" width="20" height="21" fill="none" stroke="#f0e000" stroke-width="2"/>');

/* Beam and column marks */
const lower = [10, 12, 14, 16, 19, 22, 24, 26, 28, 30, 32, 34, 36, 38, 40, 42, 44, 46, 48, 50, 52, 54, 56, 59, 62, 65, 67, 69];
for (let k = 0; k < 28; k++) {
  const x = LEFT + k * THIRD + 9;
  out.push(upright(x, 417, 'B' + (151 + 2 * k)), upright(x, 536, 'B' + (87 + 2 * k)), upright(x, 656, 'B' + lower[k]));
}
const third = [76, 78, 79, 80, 81, 82, 83, 84, 86];
for (let i = 0; i < 9; i++) {
  const x = bayX(i) + BAY / 2 - 1;
  out.push(text(x, 367, 'B' + (206 + i), 'mid'), text(x, 486, 'B' + (142 + i), 'mid'), text(x, 606, 'B' + third[i], 'mid'), text(x, 726, 'B' + (i + 1), 'mid'));
}
out.push(text(242, 666, 'B17', 'mid'), text(1037, 666, 'B61', 'mid'));
const cols3 = [15, 16, 18, 19, 20, 21, 22, 23, 25, 26];
for (let i = 0; i < 10; i++) {
  const x = bayX(i);
  out.push(text(x + 5, 368, 'C' + (37 + i)), text(x + 5, 487, 'C' + (27 + i)), text(x + 5, 607, 'C' + cols3[i]), text(x + 5, 727, 'C' + (i + 1)));
  [5, 4, 3, 1].forEach(r => {
    out.push(`<rect x="${x - 7}" y="${ROW[r] - 7}" width="13" height="13" fill="#0a0a9c"/><path d="M${x - 3} ${ROW[r] - 7}v13M${x + 2} ${ROW[r] - 7}v13M${x - 7} ${ROW[r] - 1}h13" stroke="#2c2cbc"/>`);
  });
}

/* Grid bubbles */
const bubble = (x, y, name) => {
  const p = [[-5, -11], [5, -11], [11, -5], [11, 5], [5, 11], [-5, 11], [-11, 5], [-11, -5]].map(d => (x + d[0]) + ',' + (y + d[1])).join(' ');
  return `<polygon class="bubble" points="${p}"/>` + text(x, y + 4, name, 'mid name');
};
const letters = { A: 0, B: 3, C: 5, D: 6, E: 9, F: 12, G: 15, H: 18, I: 21, J: 22, K: 24, L: 27 };
Object.keys(letters).forEach(n => {
  const x = LEFT + letters[n] * THIRD;
  out.push(line(x, 334, x, 351, 'stem'), bubble(x, 323, n));
});
[5, 4, 3, 2, 1].forEach(n => out.push(line(81, ROW[n], 97, ROW[n], 'stem'), bubble(70, ROW[n], n)));

/* Origin axes */
out.push('<path d="M104 683l4 6h-8zM130 713l7 4-7 4z"/>', text(103, 681, 'Y', 'mid axis'), text(145, 723, 'X', 'mid axis'));
plan.innerHTML = out.join('');
```
